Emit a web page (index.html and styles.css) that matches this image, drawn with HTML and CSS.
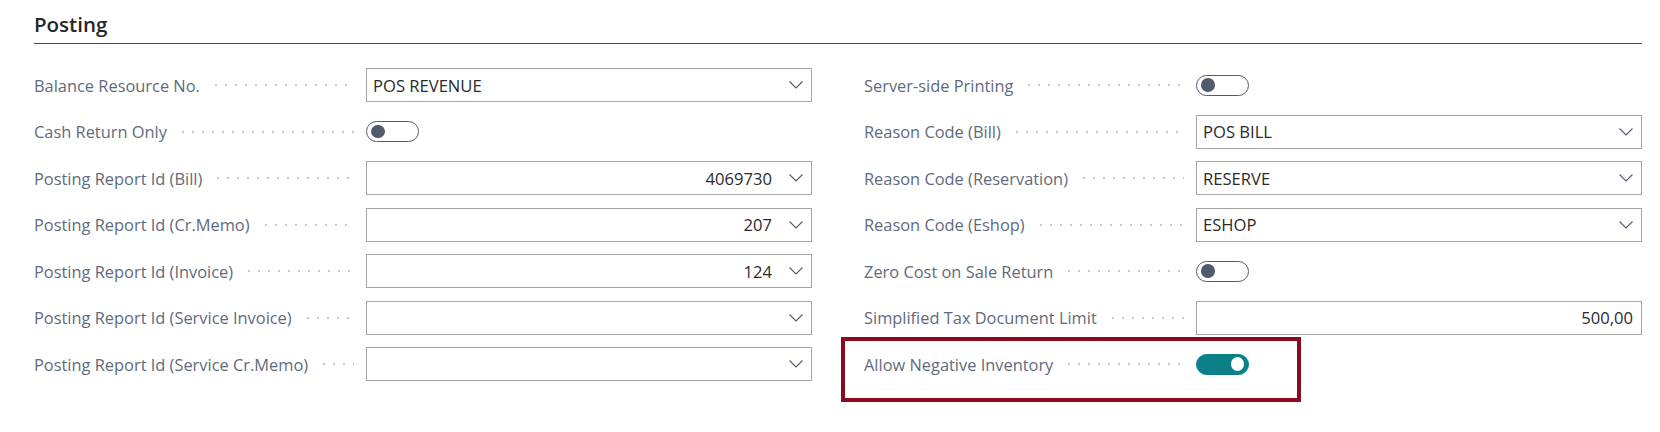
FILE: index.html
```html
<!doctype html>
<html lang="en">

	<head>
		<meta charset="UTF-8" />
		<title>Posting</title>
		<link rel="stylesheet" href="styles.css">
	</head>

	<body>
		<section class="fasttab">
			<h2 class="tab-title">Posting</h2>
			<div class="columns">
				<div class="column">
					<div class="row">
						<span class="label">Balance Resource No.</span><i class="leader"></i>
						<div class="field select"><span class="value">POS REVENUE</span><span class="chevron"><svg viewBox="0 0 14 8" width="14" height="8"><polyline points="0.5,0.5 7,7 13.5,0.5" /></svg></span></div>
					</div>
					<div class="row">
						<span class="label">Cash Return Only</span><i class="leader"></i>
						<div class="field-wrap"><span class="toggle"></span></div>
					</div>
					<div class="row">
						<span class="label">Posting Report Id (Bill)</span><i class="leader"></i>
						<div class="field select num"><span class="value">4069730</span><span class="chevron"><svg viewBox="0 0 14 8" width="14" height="8"><polyline points="0.5,0.5 7,7 13.5,0.5" /></svg></span></div>
					</div>
					<div class="row">
						<span class="label">Posting Report Id (Cr.Memo)</span><i class="leader"></i>
						<div class="field select num"><span class="value">207</span><span class="chevron"><svg viewBox="0 0 14 8" width="14" height="8"><polyline points="0.5,0.5 7,7 13.5,0.5" /></svg></span></div>
					</div>
					<div class="row">
						<span class="label">Posting Report Id (Invoice)</span><i class="leader"></i>
						<div class="field select num"><span class="value">124</span><span class="chevron"><svg viewBox="0 0 14 8" width="14" height="8"><polyline points="0.5,0.5 7,7 13.5,0.5" /></svg></span></div>
					</div>
					<div class="row">
						<span class="label">Posting Report Id (Service Invoice)</span><i class="leader"></i>
						<div class="field select"><span class="value"></span><span class="chevron"><svg viewBox="0 0 14 8" width="14" height="8"><polyline points="0.5,0.5 7,7 13.5,0.5" /></svg></span></div>
					</div>
					<div class="row">
						<span class="label">Posting Report Id (Service Cr.Memo)</span><i class="leader"></i>
						<div class="field select"><span class="value"></span><span class="chevron"><svg viewBox="0 0 14 8" width="14" height="8"><polyline points="0.5,0.5 7,7 13.5,0.5" /></svg></span></div>
					</div>
				</div>

				<div class="column">
					<div class="row">
						<span class="label">Server-side Printing</span><i class="leader"></i>
						<div class="field-wrap"><span class="toggle"></span></div>
					</div>
					<div class="row">
						<span class="label">Reason Code (Bill)</span><i class="leader"></i>
						<div class="field select"><span class="value">POS BILL</span><span class="chevron"><svg viewBox="0 0 14 8" width="14" height="8"><polyline points="0.5,0.5 7,7 13.5,0.5" /></svg></span></div>
					</div>
					<div class="row">
						<span class="label">Reason Code (Reservation)</span><i class="leader"></i>
						<div class="field select"><span class="value">RESERVE</span><span class="chevron"><svg viewBox="0 0 14 8" width="14" height="8"><polyline points="0.5,0.5 7,7 13.5,0.5" /></svg></span></div>
					</div>
					<div class="row">
						<span class="label">Reason Code (Eshop)</span><i class="leader"></i>
						<div class="field select"><span class="value">ESHOP</span><span class="chevron"><svg viewBox="0 0 14 8" width="14" height="8"><polyline points="0.5,0.5 7,7 13.5,0.5" /></svg></span></div>
					</div>
					<div class="row">
						<span class="label">Zero Cost on Sale Return</span><i class="leader"></i>
						<div class="field-wrap"><span class="toggle"></span></div>
					</div>
					<div class="row">
						<span class="label">Simplified Tax Document Limit</span><i class="leader"></i>
						<div class="field num plain"><span class="value">500,00</span></div>
					</div>
					<div class="row highlight">
						<span class="label">Allow Negative Inventory</span><i class="leader"></i>
						<div class="field-wrap"><span class="toggle on"></span></div>
					</div>
				</div>
			</div>
		</section>
	</body>

</html>
```

FILE: styles.css
```css
* {
	margin: 0;
	padding: 0;
	box-sizing: border-box;
}

body {
	background: #fff;
	font-family: "Open Sans", "Noto Sans", sans-serif;
	color: #212121;
}

.fasttab {
	padding: 11px 18px 48px 34px;
}

.tab-title {
	font-size: 20.5px;
	font-weight: 600;
	line-height: 27px;
	color: #262626;
	padding-bottom: 5px;
	border-bottom: 1px solid #3f4b5b;
}

.columns {
	display: grid;
	grid-template-columns: 1fr 1fr;
	column-gap: 52px;
	padding-top: 24px;
}

.column {
	display: flex;
	flex-direction: column;
	gap: 12.5px;
}

.row {
	display: flex;
	align-items: center;
	height: 34px;
}

.label {
	flex: none;
	font-size: 16.4px;
	color: #5f6b7c;
	white-space: nowrap;
}

.leader {
	flex: 1;
	height: 4px;
	margin: 0 12px 0 11px;
	background-image: radial-gradient(circle, #cacaca 1px, transparent 1.3px);
	background-size: 10px 4px;
	background-repeat: repeat-x;
}

.field,
.field-wrap {
	flex: none;
	width: 446px;
	height: 34px;
}

.field-wrap {
	display: flex;
	align-items: center;
}

.field {
	display: flex;
	align-items: center;
	border: 1px solid #a6a6a6;
	background: #fff;
	padding-left: 6px;
	font-size: 16.6px;
	color: #2b2b2b;
}

.field .value {
	flex: 1;
}

.field.num .value {
	text-align: right;
}

.field.plain {
	padding-right: 8px;
}

.chevron {
	flex: none;
	display: flex;
	align-items: center;
	justify-content: flex-end;
	width: 39px;
	height: 100%;
	padding-right: 8px;
}

.chevron svg {
	display: block;
	fill: none;
	stroke: #505c6d;
	stroke-width: 1.1;
}

.toggle {
	position: relative;
	display: block;
	width: 53px;
	height: 21px;
	border: 1.3px solid #505c6d;
	border-radius: 11px;
	background: #fff;
}

.toggle::after {
	content: "";
	position: absolute;
	left: 4px;
	top: 2.5px;
	width: 13.5px;
	height: 13.5px;
	border-radius: 50%;
	background: #505c6d;
}

.toggle.on {
	background: #0b8088;
	border-color: #0b8088;
}

.toggle.on::after {
	left: auto;
	right: 4px;
	background: #fff;
}

.highlight {
	position: relative;
}

.highlight::after {
	content: "";
	position: absolute;
	left: -23px;
	top: -10px;
	width: 452px;
	height: 57px;
	border: 4px solid #8b0a1e;
}
```
